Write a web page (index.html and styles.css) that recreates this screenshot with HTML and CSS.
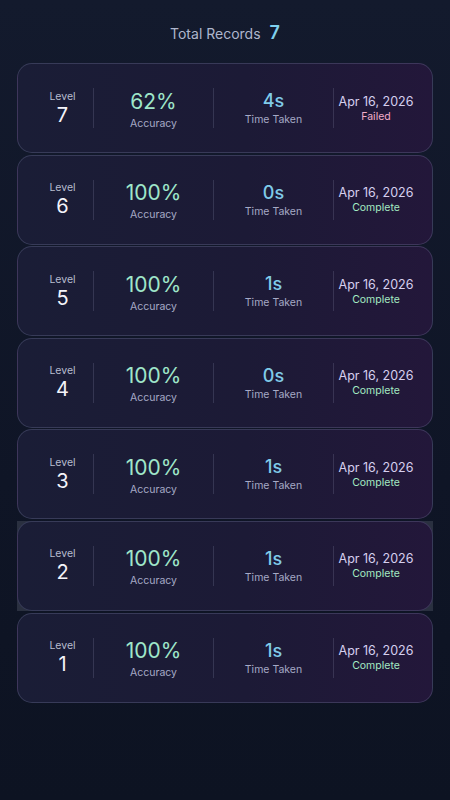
FILE: index.html
```html
<!DOCTYPE html>
<html lang="en">
<head>
    <meta charset="UTF-8">
    <meta name="viewport" content="width=device-width, initial-scale=1.0">
    <title>Records</title>
    <link rel="stylesheet" href="styles.css">
</head>
<body>

<header class="summary">
    <span class="summary-label">Total Records</span>
    <span class="summary-count">7</span>
</header>

<div class="record-list">
    <div class="record-row">
        <div class="record-card">
            <div class="col level"><span class="small">Level</span><span class="level-num">7</span></div>
            <div class="col accuracy"><span class="acc-value">62%</span><span class="small">Accuracy</span></div>
            <div class="col time"><span class="time-value">4s</span><span class="small">Time Taken</span></div>
            <div class="col date"><span class="date-value">Apr 16, 2026</span><span class="status failed">Failed</span></div>
        </div>
    </div>
    <div class="record-row">
        <div class="record-card">
            <div class="col level"><span class="small">Level</span><span class="level-num">6</span></div>
            <div class="col accuracy"><span class="acc-value">100%</span><span class="small">Accuracy</span></div>
            <div class="col time"><span class="time-value">0s</span><span class="small">Time Taken</span></div>
            <div class="col date"><span class="date-value">Apr 16, 2026</span><span class="status complete">Complete</span></div>
        </div>
    </div>
    <div class="record-row">
        <div class="record-card">
            <div class="col level"><span class="small">Level</span><span class="level-num">5</span></div>
            <div class="col accuracy"><span class="acc-value">100%</span><span class="small">Accuracy</span></div>
            <div class="col time"><span class="time-value">1s</span><span class="small">Time Taken</span></div>
            <div class="col date"><span class="date-value">Apr 16, 2026</span><span class="status complete">Complete</span></div>
        </div>
    </div>
    <div class="record-row">
        <div class="record-card">
            <div class="col level"><span class="small">Level</span><span class="level-num">4</span></div>
            <div class="col accuracy"><span class="acc-value">100%</span><span class="small">Accuracy</span></div>
            <div class="col time"><span class="time-value">0s</span><span class="small">Time Taken</span></div>
            <div class="col date"><span class="date-value">Apr 16, 2026</span><span class="status complete">Complete</span></div>
        </div>
    </div>
    <div class="record-row">
        <div class="record-card">
            <div class="col level"><span class="small">Level</span><span class="level-num">3</span></div>
            <div class="col accuracy"><span class="acc-value">100%</span><span class="small">Accuracy</span></div>
            <div class="col time"><span class="time-value">1s</span><span class="small">Time Taken</span></div>
            <div class="col date"><span class="date-value">Apr 16, 2026</span><span class="status complete">Complete</span></div>
        </div>
    </div>
    <div class="record-row pressed">
        <div class="record-card">
            <div class="col level"><span class="small">Level</span><span class="level-num">2</span></div>
            <div class="col accuracy"><span class="acc-value">100%</span><span class="small">Accuracy</span></div>
            <div class="col time"><span class="time-value">1s</span><span class="small">Time Taken</span></div>
            <div class="col date"><span class="date-value">Apr 16, 2026</span><span class="status complete">Complete</span></div>
        </div>
    </div>
    <div class="record-row">
        <div class="record-card">
            <div class="col level"><span class="small">Level</span><span class="level-num">1</span></div>
            <div class="col accuracy"><span class="acc-value">100%</span><span class="small">Accuracy</span></div>
            <div class="col time"><span class="time-value">1s</span><span class="small">Time Taken</span></div>
            <div class="col date"><span class="date-value">Apr 16, 2026</span><span class="status complete">Complete</span></div>
        </div>
    </div>
</div>

</body>
</html>
```

FILE: styles.css
```css
html, body {
    height: 100%;
}
body {
    margin: 0;
    font-family: Inter, "DejaVu Sans", sans-serif;
    background: linear-gradient(180deg, #131a2d 0%, #0f1526 60%, #0d1322 100%);
    color: #fff;
}
.summary {
    display: flex;
    justify-content: center;
    align-items: baseline;
    gap: 9px;
    padding-top: 22px;
    height: 39px;
    box-sizing: border-box;
}
.summary-label {
    font-size: 14px;
    color: #aeb6cc;
}
.summary-count {
    font-size: 18px;
    font-weight: 600;
    color: #7fd0ee;
}
.record-list {
    padding: 24px 17px 0 17px;
    display: flex;
    flex-direction: column;
    gap: 1.6px;
}
.record-row {
    border-radius: 14px;
}
.record-row.pressed {
    background: #2a3040;
    border-radius: 0;
}
.record-card {
    height: 90px;
    box-sizing: border-box;
    border: 1px solid rgba(160, 170, 210, 0.22);
    border-radius: 15px;
    background: linear-gradient(90deg, #1a1d36 0%, #1c1a36 55%, #23173a 100%);
    display: grid;
    grid-template-columns: 75px 120px 120px 1fr;
    align-items: center;
}
.col {
    height: 40px;
    display: flex;
    flex-direction: column;
    align-items: center;
    justify-content: center;
}
.col + .col {
    border-left: 1px solid rgba(170, 175, 210, 0.18);
}
.level {
    padding-left: 14px;
}
.small {
    font-size: 10.5px;
    color: #a6aac6;
    line-height: 13px;
}
.level .small {
    color: #b8bccf;
}
.level-num {
    font-size: 20px;
    line-height: 24px;
    color: #f4f4fa;
}
.acc-value {
    font-size: 21px;
    line-height: 24px;
    color: #9fe6c9;
    margin-top: 3px;
}
.accuracy .small {
    margin-top: 3px;
}
.time-value {
    font-size: 18px;
    line-height: 21px;
    font-weight: 500;
    color: #80cbe9;
}
.time .small {
    margin-top: 2px;
}
.date {
    padding-right: 14px;
}
.date-value {
    font-size: 12.5px;
    line-height: 17px;
    color: #d6cfef;
}
.status {
    font-size: 10.5px;
    line-height: 14px;
}
.failed {
    color: #f2adc9;
}
.complete {
    color: #a4eac3;
}
```
